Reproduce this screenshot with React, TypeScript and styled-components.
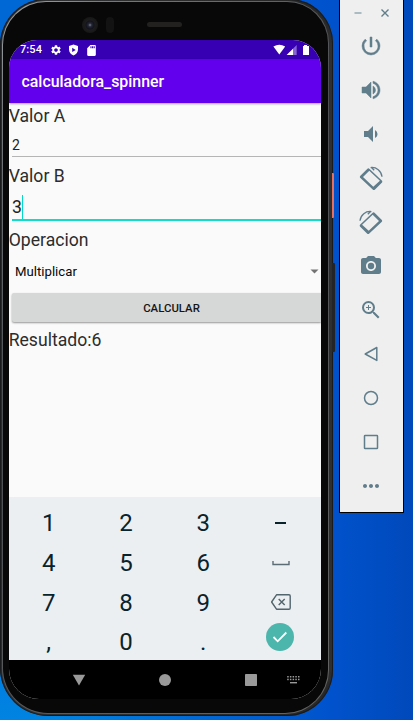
import React from 'react';
import styled, { createGlobalStyle } from 'styled-components';
import {
  MdPowerSettingsNew,
  MdVolumeUp,
  MdVolumeDown,
  MdCameraAlt,
  MdZoomIn,
  MdMoreHoriz,
  MdSettings,
  MdSdCard,
} from 'react-icons/md';

const Global = createGlobalStyle`
  * { box-sizing: border-box; }
  body { margin: 0; overflow: hidden; font-family: Roboto, sans-serif; }
`;

const Desktop = styled.div`
  width: 413px;
  height: 720px;
  overflow: hidden;
  display: flex;
  align-items: flex-start;
  background:
    linear-gradient(90deg, transparent 60px, #0052cc 332px, #0049bb 413px),
    linear-gradient(180deg, #0068d4 0%, #0068d4 50%, #0083e2 100%);
`;

const Phone = styled.div`
  position: relative;
  width: 333px;
  height: 717px;
  margin-top: -1px;
  padding: 2px 3px 2px 2px;
  flex: none;
  border-radius: 46px 44px 46px 48px;
  background: linear-gradient(90deg, #26282b 0, #34373a 3px, #303030 50%, #292929 327px, #343434 333px);
  box-shadow: inset 0 0 1px 1px #17191b;
`;

const Rim = styled.div`
  height: 100%;
  padding: 1px;
  border-radius: 44px 42px 44px 46px;
  background: linear-gradient(135deg, #a5a8a9 0%, #777a7d 10%, #4c4f52 40%, #646464 100%);
  margin-right: 1px;
`;

const Bezel = styled.div`
  height: 100%;
  display: flex;
  flex-direction: column;
  padding: 1px 5px 0 6px;
  border-radius: 43px 41px 43px 45px;
  background: #090809;
`;

const SensorBar = styled.div`
  height: 37px;
  flex: none;
  padding: 14px 0 0 73px;
  display: flex;
`;

const Camera = styled.div`
  width: 16px;
  height: 16px;
  border-radius: 50%;
  background: radial-gradient(circle, #777c8e 0, #242634 1.8px, #11131c 4px, #1c1c1d 5px, #171717 8px);
`;

const Proximity = styled.div`
  width: 8px;
  height: 16px;
  margin-left: 8px;
  border-radius: 4px;
  background: #131313;
`;

const Speaker = styled.div`
  width: 35px;
  height: 5px;
  margin: 5px 0 0 33px;
  border-radius: 3px;
  background: #222120;
`;

const Screen = styled.div`
  width: 312px;
  height: 659px;
  flex: none;
  overflow: hidden;
  border-radius: 28px 28px 30px 30px;
  background: #fafafa;
  display: flex;
  flex-direction: column;
`;

const StatusBar = styled.div`
  height: 19px;
  flex: none;
  display: flex;
  align-items: center;
  padding: 1px 11px 0 11px;
  background: #3700b3;
  color: #fff;
  font: 500 11px/18px Roboto, sans-serif;
  letter-spacing: 0.1px;
`;

const StatusIcons = styled.div`
  display: flex;
  align-items: center;
  gap: 6px;
  margin-left: 8px;
  svg { display: block; }
`;

const SignalIcons = styled.div`
  margin-left: auto;
  display: flex;
`;

const AppBar = styled.div`
  height: 44px;
  flex: none;
  padding-left: 12.5px;
  background: #6200ee;
  color: #fff;
  font: 500 15.9px/46px Roboto, sans-serif;
  position: relative;
  box-shadow: 0 1px 2px rgba(0, 0, 0, 0.35);
`;

const Form = styled.div`
  flex: 1;
  color: #2c2c2c;
  overflow: hidden;
  display: flex;
  flex-direction: column;
`;

const Label = styled.div<{ $h: number; $line?: number }>`
  height: ${(p) => p.$h}px;
  flex: none;
  font-size: 17.6px;
  line-height: ${(p) => p.$line || p.$h}px;
  text-indent: -0.3px;
  white-space: nowrap;
`;

const Field = styled.div<{ $h: number; $size: number; $active?: boolean }>`
  height: ${(p) => p.$h}px;
  flex: none;
  margin-left: 3px;
  padding-top: 5px;
  display: flex;
  align-items: center;
  font-size: ${(p) => p.$size}px;
  color: #222;
  border-bottom: ${(p) => (p.$active ? '2px solid #10dcc9' : '1px solid #b5b5b5')};
`;

const Caret = styled.span`
  width: 1px;
  height: 24px;
  background: #03dac5;
`;

const Spinner = styled.div`
  height: 37px;
  flex: none;
  padding: 0 2px 5px 6px;
  display: flex;
  align-items: center;
  justify-content: space-between;
  font-size: 13.2px;
  color: #080808;
`;

const CalcButton = styled.button`
  height: 29px;
  flex: none;
  margin: 1px 0 1px 3px;
  padding: 1px 0 0 10px;
  border: 0;
  border-radius: 2px 0 0 2px;
  background: #d6d7d7;
  color: #151515;
  font: 500 11.4px/29px Roboto, sans-serif;
  box-shadow: 0 1px 2px rgba(0, 0, 0, 0.4);
`;

const Keyboard = styled.div`
  height: 163px;
  flex: none;
  padding: 6px 0 0 1px;
  display: grid;
  grid-template-columns: repeat(4, 77.3px);
  grid-auto-rows: 39.7px;
  background: #ebeff2;
`;

const Key = styled.div`
  display: flex;
  align-items: center;
  justify-content: center;
  font-size: 24px;
  line-height: 39px;
  color: #08232c;
`;

const Digit = styled.span`
  padding-top: 2px;
`;

const Enter = styled.div`
  width: 28px;
  height: 28px;
  margin: 0 1px 10px 0;
  border-radius: 50%;
  display: flex;
  align-items: center;
  justify-content: center;
  background: #4db6ac;
`;

const NavBar = styled.div`
  height: 39px;
  flex: none;
  padding: 0 20px 0 63px;
  display: flex;
  align-items: center;
  background: #000;
  svg { display: block; flex: none; }
`;

const NavItem = styled.div<{ $gap?: number }>`
  margin-left: ${(p) => p.$gap || 0}px;
`;

const SideKey = styled.div<{ $top: number; $h: number; $color: string; $w: number }>`
  position: absolute;
  left: 332px;
  top: ${(p) => p.$top}px;
  width: ${(p) => p.$w}px;
  height: ${(p) => p.$h}px;
  border-radius: 0 1px 1px 0;
  background: ${(p) => p.$color};
`;

const Toolbar = styled.div`
  width: 65px;
  height: 513px;
  margin-left: 6px;
  flex: none;
  border: 1px solid #000;
  border-top: 0;
  background: #efefef;
  color: #607d8b;
  display: flex;
  flex-direction: column;
  align-items: center;
`;

const WindowControls = styled.div`
  height: 24px;
  flex: none;
  padding: 8px 0 0 14px;
  display: flex;
  gap: 18px;
  align-self: flex-start;
`;

const Tool = styled.div`
  height: 44px;
  flex: none;
  display: flex;
  align-items: center;
  justify-content: center;
  padding-right: 1px;
  svg { display: block; }
`;

const BoldIcon = styled.span`
  path { stroke-width: 0.5px; }
  path[fill='none'] { stroke: none; }
`;

const RotateShape = () => (
  <>
    <path
      fill="currentColor"
      fillRule="evenodd"
      d="M8.2 2.9Q9.4 1.8 10.6 2.9L22.8 14.6Q23.8 15.6 22.8 16.7L16 23.4Q14.8 24.4 13.7 23.4L1.4 12Q.3 10.9 1.4 9.8ZM10.3 4.7L4 11L14.3 20.7L20.9 14.8Z"
    />
    <path d="M11.6 1.6C17.3 .7 22.4 5.2 23 10.8M15.2 4.2L12.2 1.3" fill="none" stroke="currentColor" strokeWidth="1.3" />
  </>
);

const RotateLeft = () => (
  <svg width="24" height="24" viewBox="0 0 24 24"><RotateShape /></svg>
);

const RotateRight = () => (
  <svg width="24" height="24" viewBox="0 0 24 24"><g transform="translate(24 0) scale(-1 1)"><RotateShape /></g></svg>
);

const Outline = ({ children }: { children: React.ReactNode }) => (
  <svg width="24" height="24" viewBox="0 0 24 24" fill="none" stroke="currentColor" strokeWidth="1.5" strokeLinejoin="round">
    {children}
  </svg>
);

const tools = [
  <BoldIcon><MdPowerSettingsNew size={24} /></BoldIcon>,
  <BoldIcon><MdVolumeUp size={24} /></BoldIcon>,
  <MdVolumeDown size={24} />,
  <RotateLeft />,
  <RotateRight />,
  <MdCameraAlt size={24} />,
  <MdZoomIn size={24} />,
  <Outline><path d="M17.8 5.5V18.4L6.2 12Z" /></Outline>,
  <Outline><circle cx="12" cy="12" r="6.5" /></Outline>,
  <Outline><rect x="5.5" y="5.5" width="13" height="13" rx=".6" /></Outline>,
  <MdMoreHoriz size={24} />,
];

const SpaceIcon = () => (
  <svg width="18" height="6" viewBox="0 0 18 6"><path d="M1 1V4.5H17V1" fill="none" stroke="#5b6c74" strokeWidth="1.4" /></svg>
);

const DeleteIcon = () => (
  <svg width="22" height="18" viewBox="0 0 22 18" fill="none" stroke="#52646c" strokeWidth="1.4" strokeLinejoin="round">
    <path d="M6.5 1.8H19Q20.2 1.8 20.2 3V15Q20.2 16.2 19 16.2H6.5L1.6 9Z" />
    <path d="M8.7 6L14.7 12M14.7 6L8.7 12" />
  </svg>
);

const keys: React.ReactNode[] = [
  '1', '2', '3',
  <svg width="11" height="2" viewBox="0 0 11 2"><path d="M0 1H11" stroke="#08232c" strokeWidth="2" /></svg>,
  '4', '5', '6', <SpaceIcon />,
  '7', '8', '9', <DeleteIcon />,
  ',', '0', '.',
  <Enter>
    <svg width="16" height="14" viewBox="0 0 16 14"><path d="M1.5 7L5.7 11.3L14.3 2.5" fill="none" stroke="#fff" strokeWidth="1.8" /></svg>
  </Enter>,
];

const keyDots = [0, 1, 2, 3, 4];

export default function App() {
  return (
    <Desktop>
      <Global />
      <Phone>
        <Rim>
          <Bezel>
            <SensorBar>
              <Camera />
              <Proximity />
              <Speaker />
            </SensorBar>
            <Screen>
              <StatusBar>
                7:54
                <StatusIcons>
                  <MdSettings size={12} />
                  <svg width="11" height="12" viewBox="0 0 11 12">
                    <path fillRule="evenodd" fill="#fff" d="M5.5 .5L10 2V5.5C10 8.5 8 10.5 5.5 11.4C3 10.5 1 8.5 1 5.5V2ZM4.2 3.8V8L7.7 5.9Z" />
                  </svg>
                  <MdSdCard size={13} />
                </StatusIcons>
                <SignalIcons>
                  <svg width="38" height="12" viewBox="0 0 38 12" fill="#fff">
                    <path d="M1.4 2.6Q7.3-.9 13.2 2.6L7.3 10.4Z" />
                    <path d="M24.7 1V11H14.7Z" fillOpacity=".4" />
                    <path d="M21 4.7V11H14.7Z" />
                    <path d="M32 1H35V2H37V11H31V2H32Z" />
                  </svg>
                </SignalIcons>
              </StatusBar>
              <AppBar>calculadora_spinner</AppBar>
              <Form>
                <Label $h={25} $line={27}>Valor A</Label>
                <Field $h={29} $size={14}>2</Field>
                <Label $h={32} $line={38}>Valor B</Label>
                <Field $h={32} $size={17.6} $active>3<Caret /></Field>
                <Label $h={34} $line={39}>Operacion</Label>
                <Spinner>
                  Multiplicar
                  <svg width="9" height="5" viewBox="0 0 9 5"><path d="M.5 .5H8.5L4.5 4.5Z" fill="#737373" /></svg>
                </Spinner>
                <CalcButton>CALCULAR</CalcButton>
                <Label $h={33} $line={35}>Resultado:6</Label>
              </Form>
              <Keyboard>
                {keys.map((k, i) => <Key key={i}>{typeof k === 'string' ? <Digit>{k}</Digit> : k}</Key>)}
              </Keyboard>
              <NavBar>
                <NavItem>
                  <svg width="14" height="12" viewBox="0 0 14 12"><path d="M.8 .8H13.2L7 11.5Z" fill="#999" /></svg>
                </NavItem>
                <NavItem $gap={73}>
                  <svg width="12" height="12" viewBox="0 0 12 12"><circle cx="6" cy="6" r="6" fill="#999" /></svg>
                </NavItem>
                <NavItem $gap={74}>
                  <svg width="12" height="12" viewBox="0 0 12 12"><rect width="12" height="12" rx=".8" fill="#999" /></svg>
                </NavItem>
                <NavItem $gap={30}>
                  <svg width="13" height="8" viewBox="0 0 13 8" fill="#999">
                    {keyDots.map((c) => (
                      <React.Fragment key={c}>
                        <rect x={c * 2.7 + 0.2} y="0" width="1.5" height="1.5" />
                        <rect x={c * 2.7 + 0.2} y="2.7" width="1.5" height="1.5" />
                      </React.Fragment>
                    ))}
                    <rect x="3" y="6" width="7" height="1.4" />
                  </svg>
                </NavItem>
              </NavBar>
            </Screen>
          </Bezel>
        </Rim>
        <SideKey $top={174} $h={45} $w={2} $color="#e8705f" />
        <SideKey $top={264} $h={89} $w={3} $color="#222426" />
      </Phone>
      <Toolbar>
        <WindowControls>
          <svg width="8" height="10" viewBox="0 0 8 10"><path d="M.5 5H7.5" stroke="#90a4ae" strokeWidth="1.4" /></svg>
          <svg width="10" height="10" viewBox="0 0 10 10"><path d="M1.5 1.5L8.5 8.5M8.5 1.5L1.5 8.5" stroke="#607d8b" strokeWidth="1.4" /></svg>
        </WindowControls>
        {tools.map((t, i) => <Tool key={i}>{t}</Tool>)}
      </Toolbar>
    </Desktop>
  );
}
